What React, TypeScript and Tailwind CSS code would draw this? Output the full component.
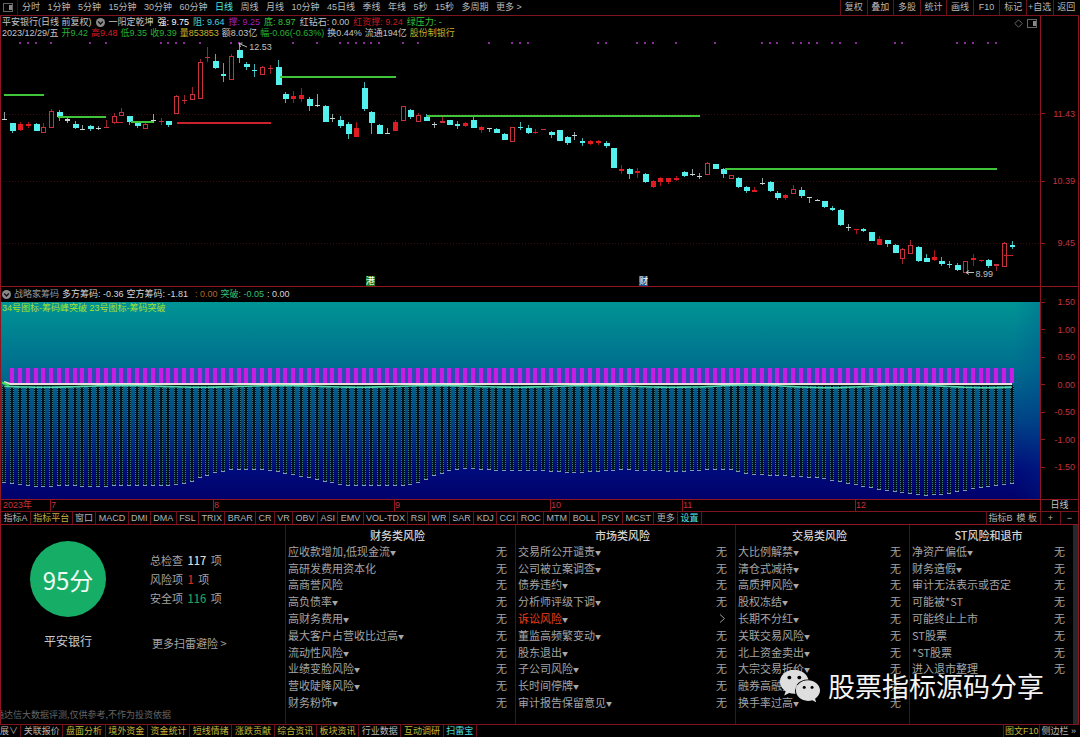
import clsx from 'clsx';
import { FaWeixin } from 'react-icons/fa';

type Kind = 'c' | 'r' | 'R' | 'w';
// kind, high, body top, body bottom, low
type Candle = [Kind, number, number, number, number];

const PITCH = 7.81;
const barX = (i: number) => 4.3 + i * PITCH;

const candles: Candle[] = [
  ['w', 112, 119, 120, 120], ['c', 123, 123, 131, 133], ['R', 122, 124, 130, 131], ['R', 122, 124, 126, 128],
  ['c', 123, 124, 131, 131], ['r', 123, 127, 132, 132], ['r', 109, 111, 127, 128], ['c', 110, 112, 117, 121],
  ['w', 117, 119, 121, 123], ['c', 121, 124, 128, 129], ['w', 125, 129, 130, 130], ['c', 125, 126, 129, 131],
  ['w', 126, 128, 129, 130], ['r', 120, 127, 128, 128], ['r', 113, 116, 122, 124], ['r', 108, 112, 115, 116],
  ['c', 116, 116, 122, 125], ['c', 121, 123, 126, 128], ['r', 123, 124, 128, 128], ['w', 114, 120, 121, 123],
  ['r', 118, 121, 122, 125], ['c', 121, 121, 125, 127], ['r', 95, 96, 113, 113], ['r', 95, 100, 101, 104],
  ['r', 87, 94, 99, 100], ['r', 59, 62, 98, 98], ['r', 47, 57, 58, 62], ['c', 54, 61, 68, 69],
  ['c', 63, 74, 76, 82], ['r', 54, 56, 79, 80], ['c', 43, 50, 58, 63], ['c', 62, 64, 67, 70],
  ['c', 64, 70, 71, 77], ['r', 66, 67, 74, 74], ['r', 65, 68, 69, 74], ['c', 60, 67, 85, 85],
  ['c', 92, 94, 99, 103], ['R', 91, 96, 99, 103], ['R', 88, 95, 99, 102], ['c', 97, 99, 106, 111],
  ['w', 94, 105, 106, 107], ['c', 105, 106, 122, 122], ['w', 114, 118, 119, 122], ['c', 116, 120, 126, 128],
  ['c', 122, 124, 134, 139], ['R', 122, 128, 137, 137], ['c', 82, 88, 109, 111], ['c', 111, 112, 123, 134],
  ['c', 124, 125, 134, 134], ['w', 128, 133, 134, 134], ['R', 120, 122, 131, 131], ['r', 106, 106, 120, 120],
  ['c', 109, 110, 117, 119], ['r', 113, 115, 121, 122], ['c', 114, 117, 121, 121], ['w', 122, 124, 125, 128],
  ['r', 116, 121, 123, 123], ['c', 120, 120, 125, 125], ['c', 121, 124, 126, 129], ['R', 122, 123, 126, 127],
  ['c', 115, 120, 128, 128], ['R', 126, 127, 130, 133], ['w', 128, 128, 129, 132], ['c', 128, 129, 133, 133],
  ['c', 133, 134, 140, 140], ['r', 127, 127, 141, 141], ['c', 122, 127, 128, 130], ['c', 125, 128, 133, 134],
  ['R', 129, 132, 133, 134], ['r', 129, 129, 130, 130], ['c', 131, 132, 135, 138], ['c', 130, 130, 141, 141],
  ['c', 136, 137, 143, 145], ['w', 132, 135, 136, 140], ['c', 138, 141, 143, 146], ['R', 140, 141, 144, 145],
  ['R', 140, 141, 143, 145], ['c', 141, 143, 146, 148], ['c', 148, 148, 168, 168], ['R', 165, 169, 171, 174],
  ['c', 168, 169, 174, 179], ['R', 168, 171, 173, 178], ['c', 173, 174, 182, 183], ['R', 180, 181, 187, 188],
  ['R', 177, 178, 182, 186], ['R', 178, 178, 182, 184], ['R', 176, 178, 180, 181], ['c', 171, 172, 176, 177],
  ['w', 169, 174, 175, 176], ['w', 173, 176, 177, 179], ['r', 162, 163, 174, 174], ['c', 164, 164, 169, 169],
  ['c', 168, 169, 174, 178], ['r', 175, 175, 178, 178], ['c', 177, 178, 187, 188], ['c', 186, 187, 191, 193],
  ['R', 187, 190, 192, 192], ['w', 178, 183, 184, 185], ['c', 181, 182, 191, 192], ['c', 191, 193, 198, 200],
  ['R', 194, 195, 198, 200], ['r', 185, 189, 193, 193], ['c', 187, 190, 196, 198], ['w', 197, 197, 198, 203],
  ['w', 199, 200, 201, 201], ['c', 201, 201, 207, 208], ['c', 206, 208, 210, 211], ['c', 209, 210, 225, 226],
  ['w', 224, 227, 228, 231], ['R', 229, 229, 230, 234], ['c', 228, 229, 231, 232], ['c', 232, 232, 241, 241],
  ['R', 236, 239, 245, 245], ['c', 240, 240, 244, 247], ['c', 244, 245, 253, 253], ['r', 248, 249, 258, 264],
  ['r', 240, 245, 253, 253], ['c', 246, 247, 261, 262], ['c', 254, 258, 262, 262], ['R', 250, 257, 260, 261],
  ['c', 257, 261, 264, 266], ['c', 261, 264, 265, 268], ['c', 263, 265, 270, 271], ['r', 261, 261, 272, 272],
  ['R', 254, 258, 260, 266], ['R', 260, 260, 261, 262], ['c', 259, 260, 266, 268], ['r', 264, 264, 266, 271],
  ['r', 242, 243, 266, 267], ['c', 241, 245, 247, 249],
];

const dotBars = [
  2, 3, 4, 6, 11, 13, 20, 21, 22, 23, 25, 29, 30, 37, 40, 43, 44, 45, 46, 47, 48, 51, 53, 62, 65, 66, 67,
  76, 77, 81, 82, 83, 86, 91, 97, 98, 99, 101, 102, 103, 104, 106, 107, 109, 114, 115, 122, 123, 124, 126, 127,
];

// x1, x2, y, color
const levels: [number, number, number, string][] = [
  [4, 44, 94, '#3fc43a'],
  [58, 106, 116, '#3fc43a'],
  [131, 153, 121, '#3fc43a'],
  [113, 123, 122, '#c8232c'],
  [177, 271, 122, '#c8232c'],
  [280, 396, 76, '#3fc43a'],
  [427, 700, 115, '#3fc43a'],
  [725, 997, 168, '#3fc43a'],
  [1004, 1013, 255, '#c8232c'],
];

// bar index, bottom of the column
const depth: [number, number][] = [
  [0, 482], [3, 485], [5, 486], [7, 485], [12, 486], [15, 485], [21, 485], [23, 483], [24, 481], [25, 477],
  [27, 472], [29, 469], [33, 469], [35, 471], [37, 474], [40, 479], [44, 485], [51, 485], [53, 482], [55, 475],
  [57, 470], [59, 468], [62, 469], [63, 470], [69, 470], [73, 472], [77, 470], [79, 469], [83, 470], [86, 471],
  [90, 469], [93, 469], [95, 473], [99, 475], [104, 477], [107, 481], [109, 484], [113, 490], [116, 493],
  [118, 495], [121, 493], [124, 488], [126, 486], [129, 483],
];

function depthAt(i: number) {
  const n = depth.findIndex(([b]) => b >= i);
  if (n <= 0) return depth[0][1];
  const [x0, y0] = depth[n - 1];
  const [x1, y1] = depth[n];
  return Math.round(y0 + ((y1 - y0) * (i - x0)) / (x1 - x0));
}

const signal = candles
  .map((_, i) => `${barX(i).toFixed(1)},${(386.4 + Math.sin(i / 3.2) * (i > 88 ? 1.3 : 0.8)).toFixed(1)}`)
  .join(' ');

const periods = ['分时', '1分钟', '5分钟', '15分钟', '30分钟', '60分钟', '日线', '周线', '月线', '10分钟', '45日线', '季线', '年线', '5秒', '15秒', '多周期', '更多 >'];
const tools = ['复权', '叠加', '多股', '统计', '画线', 'F10', '标记', '+自选', '返回'];
const indicators = ['指标A', '指标平台', '窗口', 'MACD', 'DMI', 'DMA', 'FSL', 'TRIX', 'BRAR', 'CR', 'VR', 'OBV', 'ASI', 'EMV', 'VOL-TDX', 'RSI', 'WR', 'SAR', 'KDJ', 'CCI', 'ROC', 'MTM', 'BOLL', 'PSY', 'MCST', '更多', '设置'];
const footerTabs = ['关联报价', '盘面分析', '境外资金', '资金统计', '短线情绪', '涨跌贡献', '综合资讯', '板块资讯', '行业数据', '互动调研', '扫雷宝'];

const risks = [
  {
    title: '财务类风险',
    items: ['应收款增加,低现金流▼', '高研发费用资本化', '高商誉风险', '高负债率▼', '高财务费用▼', '最大客户占营收比过高▼', '流动性风险▼', '业绩变脸风险▼', '营收陡降风险▼', '财务粉饰▼'],
  },
  {
    title: '市场类风险',
    items: ['交易所公开谴责▼', '公司被立案调查▼', '债券违约▼', '分析师评级下调▼', '诉讼风险▼', '董监高频繁变动▼', '股东退出▼', '子公司风险▼', '长时间停牌▼', '审计报告保留意见▼'],
  },
  {
    title: '交易类风险',
    items: ['大比例解禁▼', '清仓式减持▼', '高质押风险▼', '股权冻结▼', '长期不分红▼', '关联交易风险▼', '北上资金卖出▼', '大宗交易折价▼', '融券高融资▼', '换手率过高▼'],
  },
  {
    title: 'ST风险和退市',
    items: ['净资产偏低▼', '财务造假▼', '审计无法表示或否定', '可能被*ST', '可能终止上市', 'ST股票', '*ST股票', '进入退市整理', '', ''],
  },
];

const fill = { c: '#54f0ee', r: '#c8323c', R: '#e01c22', w: '#c8d8d8' };

function PanelIcon() {
  return (
    <svg className="h-[9px] w-[11px]" viewBox="0 0 11 9" fill="none" stroke="#666">
      <rect x="0.5" y="0.5" width="9" height="8" />
      <rect x="6" y="2" width="3" height="5" fill="#888" stroke="none" />
    </svg>
  );
}

function ToggleIcon() {
  return (
    <svg className="h-[9px] w-[9px] shrink-0" viewBox="0 0 9 9">
      <circle cx="4.5" cy="4.5" r="4.5" fill="#8a8a8a" />
      <path d="M2.2 3.5 4.5 6 6.8 3.5" stroke="#111" strokeWidth="1.3" fill="none" />
    </svg>
  );
}

function Toolbar() {
  return (
    <header className="flex h-4 items-center border-b border-[#7d141e] text-[#b8b8b8]">
      <div className="flex h-full w-[18px] items-center justify-center border-r border-[#4a0c12]">
        <PanelIcon />
      </div>
      <nav className="flex w-[504px] justify-between pl-1">
        {periods.map((p) => (
          <button key={p} className={clsx('whitespace-nowrap', p === '日线' && 'text-[#4fe6e6]')}>
            {p}
          </button>
        ))}
      </nav>
      <div className="ml-auto flex h-full w-[239px]">
        {tools.map((t) => (
          <button key={t} className="flex-1 border-l border-[#6b101a] whitespace-nowrap">
            {t}
          </button>
        ))}
      </div>
    </header>
  );
}

function KLine() {
  return (
    <section className="flex border-b border-[#8f1620]">
      <div className="min-w-0 flex-1">
        <div className="relative h-6 pt-px pl-px leading-[11px] whitespace-nowrap">
          <div className="flex items-center gap-1 text-[#c4c4c4]">
            <span>平安银行(日线 前复权)</span>
            <ToggleIcon />
            <span>一阳定乾坤</span>
            <span className="text-white">强: 9.75</span>
            <span className="text-[#45d5e0]">阻: 9.64</span>
            <span className="text-[#a51fb0]">撑: 9.25</span>
            <span className="text-[#35c53c]">底: 8.97</span>
            <span>红钻石: 0.00</span>
            <span className="text-[#c01c22]">红资撑: 9.24</span>
            <span className="text-[#35c53c]">绿压力: -</span>
          </div>
          <div className="flex gap-[3px] text-[#c4c4c4]">
            <span>2023/12/29/五</span>
            <span className="text-[#27b035]">开9.42</span>
            <span className="text-[#d81e26]">高9.48</span>
            <span className="text-[#27b035]">低9.35</span>
            <span className="text-[#27b035]">收9.39</span>
            <span className="text-[#c9b02c]">量853853</span>
            <span>额8.03亿</span>
            <span className="text-[#27b035]">幅-0.06(-0.63%)</span>
            <span>换0.44%</span>
            <span>流通194亿</span>
            <span className="text-[#c9b02c]">股份制银行</span>
          </div>
          <div className="absolute top-[3px] right-0.5 flex items-center gap-1">
            <svg className="h-[9px] w-[9px]" viewBox="0 0 9 9" fill="none" stroke="#666">
              <path d="M4.5 0.8 8.2 4.5 4.5 8.2 0.8 4.5Z" />
            </svg>
            <PanelIcon />
          </div>
        </div>

        <div className="relative">
          <svg className="block h-[246px] w-full" viewBox="1 40 1039 246" preserveAspectRatio="none" shapeRendering="crispEdges">
            {[114.5, 181.5, 243.5].map((y) => (
              <line key={y} x1="0" x2="1040" y1={y} y2={y} stroke="#3c0c0f" strokeDasharray="1 2" />
            ))}
            {dotBars.map((i) => (
              <rect key={i} x={Math.round(barX(i)) - 1} y="42" width="2" height="2" fill="#8c2a9c" />
            ))}
            {candles.map(([k, hi, top, bottom, lo], i) => {
              const x = Math.round(barX(i));
              const hollow = k === 'r' && bottom - top > 2;
              return (
                <g key={i}>
                  <line x1={x + 0.5} x2={x + 0.5} y1={hi} y2={lo} stroke={fill[k]} strokeOpacity="0.75" />
                  {hollow ? (
                    <rect x={x - 1.5} y={top + 0.5} width="4" height={bottom - top} fill="#000" stroke={fill[k]} />
                  ) : (
                    <rect x={x - 2} y={top} width={k === 'c' && bottom - top > 2 ? 6 : 5} height={bottom - top} fill={fill[k]} />
                  )}
                </g>
              );
            })}
            {levels.map(([x1, x2, y, color]) => (
              <rect key={x1} x={x1} y={y} width={x2 - x1} height={y === 255 || x1 === 113 ? 1 : 2} fill={color} />
            ))}
            <g shapeRendering="auto" stroke="#bbb" fill="none">
              <path d="M239 43.5 247 47M239 43.5l3.5-.5M239 43.5l1.5 3.5" />
              <path d="M966 272.5h8M966 272.5l3-2M966 272.5l3 2" />
            </g>
          </svg>
          <span className="absolute top-[1%] left-[23.9%] leading-[11px] text-[#c0c0c0]">12.53</span>
          <span className="absolute top-[93%] left-[93.8%] leading-[11px] text-[#c0c0c0]">8.99</span>
          <span className="absolute bottom-0 left-[35.1%] bg-[#157a1c] leading-[10px] text-white">港</span>
          <span className="absolute bottom-0 left-[61.4%] bg-[#174f8c] leading-[10px] text-white">财</span>
        </div>
      </div>

      <div className="relative w-[38px] border-l border-[#8f1620] text-right text-[#c2343e]">
        {[
          ['11.43', 'top-[34%]'],
          ['10.39', 'top-[59%]'],
          ['9.45', 'top-[82%]'],
        ].map(([v, top]) => (
          <div key={v} className={clsx('absolute right-0 flex w-full items-center justify-between pr-[3px] leading-[12px]', top)}>
            <i className="h-px w-1 bg-[#8f1620]" />
            {v}
          </div>
        ))}
      </div>
    </section>
  );
}

function ChipChart() {
  return (
    <section className="flex border-b border-[#8f1620]">
      <div className="min-w-0 flex-1">
        <div className="flex h-[15px] items-center gap-[3px] pl-px whitespace-nowrap text-[#d8d8d8]">
          <ToggleIcon />
          <span className="text-[#9a9a9a]">战略家筹码</span>
          <span>多方筹码: -0.36</span>
          <span>空方筹码: -1.81</span>
          <span className="pl-1 text-[#b06a2c]">: 0.00</span>
          <span className="text-[#35c078]">突破: -0.05</span>
          <span>: 0.00</span>
        </div>
        <div className="relative">
          <svg className="block h-[197px] w-full" viewBox="1 302 1039 197" preserveAspectRatio="none">
            <defs>
              <linearGradient id="sea" x1="0" y1="0" x2="0" y2="1">
                <stop offset="0" stopColor="#009494" />
                <stop offset="0.35" stopColor="#006c8e" />
                <stop offset="0.6" stopColor="#004486" />
                <stop offset="0.85" stopColor="#000c7c" />
                <stop offset="1" stopColor="#00006a" />
              </linearGradient>
              <linearGradient id="edge" x1="0" y1="0" x2="1" y2="0">
                <stop offset="0" stopColor="#003c8c" stopOpacity="0" />
                <stop offset="1" stopColor="#003c8c" stopOpacity="0.2" />
              </linearGradient>
            </defs>
            <rect x="0" y="302" width="1040" height="197" fill="url(#sea)" />
            <rect x="1014" y="302" width="26" height="197" fill="url(#edge)" />
            <rect x="10" y="368" width="1004" height="15" fill="#3c46be" fillOpacity="0.7" />
            <g shapeRendering="crispEdges">
              {candles.map((_, i) => {
                const x = Math.round(barX(i));
                const y = depthAt(i);
                return (
                  <g key={i}>
                    {i > 0 && <rect x={x - 2} y="368" width="4" height="15" fill="#c81ee4" />}
                    <rect x={x - 2} y="386" width="4" height={y - 386} fill="#00141e" />
                    <path d={`M${x - 1.5} 386V${y}M${x + 1.5} 386V${y}`} stroke="#3c7c80" strokeDasharray="1 1" fill="none" />
                    <path d={`M${x - 2} ${y + 0.5}h4`} stroke="#7c9cb0" />
                  </g>
                );
              })}
              <rect x="4" y="385" width="1009" height="1" fill="#08201c" />
            </g>
            <path d="M4 382 10 384H1012" stroke="#ecdce0" strokeWidth="2" fill="none" />
            <polyline points={signal} fill="none" stroke="#52d8a8" strokeWidth="1.6" />
            <path d="M2 382.5 9 385.5" stroke="#3cd860" strokeWidth="2" />
          </svg>
          <p className="absolute top-px left-px leading-[11px] whitespace-nowrap text-[#a8e02c]">
            34号图标-筹码峰突破 23号图标-筹码突破
          </p>
        </div>
      </div>
      <div className="flex w-[38px] flex-col justify-between border-l border-[#8f1620] pt-[9px] pb-[26px] text-right text-[#c2343e]">
        {['1.50', '1.00', '0.50', '0.00', '-0.50', '-1.00', '-1.50'].map((v) => (
          <div key={v} className="flex items-center justify-between pr-[3px] leading-[12px]">
            <i className="h-px w-1 bg-[#8f1620]" />
            {v}
          </div>
        ))}
      </div>
    </section>
  );
}

function TimeAxis() {
  return (
    <div className="flex h-3 border-b border-[#7d141e] leading-[11px] text-[#c8323c]">
      <div className="grid flex-1 grid-cols-[49fr_163fr_181fr_156fr_132fr_173fr_185fr]">
        {['2023年', '7', '8', '9', '10', '11', '12'].map((m, i) => (
          <span key={m} className={clsx(i > 0 ? 'border-l border-[#8f1620]' : 'pl-0.5')}>
            {m}
          </span>
        ))}
      </div>
      <span className="w-[38px] border-l border-[#8f1620] text-center text-[#c4c4c4]">日线</span>
    </div>
  );
}

function IndicatorTabs() {
  return (
    <nav className="flex h-[13px] border-b border-[#8f1620] leading-[12px] text-[#b4b4b4]">
      <div className="flex w-[701px]">
        {indicators.map((t) => (
          <button
            key={t}
            className={clsx(
              'flex-auto border-r border-[#6b101a] whitespace-nowrap',
              t === '指标平台' && 'text-[#c0b040]',
              t === '设置' && 'text-[#4fe6e6]'
            )}
          >
            {t}
          </button>
        ))}
      </div>
      <div className="ml-auto flex">
        <button className="border-l border-[#6b101a] px-px">指标B</button>
        <button className="px-[3px]">模 板</button>
        <button className="w-5 border-l border-[#6b101a]">+</button>
        <button className="w-[18px] border-l border-[#6b101a]">−</button>
      </div>
    </nav>
  );
}

function RiskTable({ title, items }: { title: string; items: string[] }) {
  return (
    <div className="border-l border-[#222] pr-2 pl-0.5">
      <table className="h-[168px] w-full">
        <caption className="h-[18px] pt-[2px] leading-[16px] font-medium text-[#d0d0d0]">{title}</caption>
        <tbody>
          {items.map((item, i) => {
            const hit = item.startsWith('诉讼');
            return (
              <tr key={i} className="leading-[15px]">
                <td className={clsx('p-0 whitespace-nowrap', hit && 'text-[#e8401c]')}>
                  {item.replace('▼', '')}
                  {item.endsWith('▼') && <span className="align-[1px] text-[6px] leading-none text-[#a8a8a8]">▼</span>}
                </td>
                <td className="p-0 text-right">
                  {hit ? (
                    <svg className="ml-auto h-[9px] w-[9px]" viewBox="0 0 9 9" fill="none" stroke="#999">
                      <path d="M2 0.5 6.5 4.5 2 8.5" />
                    </svg>
                  ) : item ? (
                    '无'
                  ) : (
                    '\u00a0'
                  )}
                </td>
              </tr>
            );
          })}
        </tbody>
      </table>
    </div>
  );
}

function RiskPanel() {
  return (
    <section className="relative flex h-[199px] overflow-hidden font-['Noto_Sans_CJK_SC',sans-serif] text-[11px] text-[#a4a4a4]">
      <div className="grid flex-1 grid-cols-[284fr_230fr_220fr_174fr_164fr]">
        <div className="flex flex-col justify-between">
          <div className="flex pt-4 pl-[29px]">
            <div className="flex w-[76px] flex-col items-center">
              <div className="flex h-[76px] w-[76px] items-center justify-center rounded-full bg-[#16ad67] text-[24px] text-[#eefaf2]">
                95分
              </div>
              <p className="mt-[15px] text-[12px] leading-[18px] text-[#c8c8c8]">平安银行</p>
            </div>
            <div className="ml-11 pt-[10px] leading-[19px]">
              <p>总检查 <b className="mx-0.5 font-medium text-[#d8d8d8]">117</b> 项</p>
              <p>风险项 <b className="mx-0.5 font-medium text-[#d8281e]">1</b> 项</p>
              <p>安全项 <b className="mx-0.5 font-medium text-[#1f9c58]">116</b> 项</p>
              <a href="#more" className="mt-[26px] ml-0.5 block">更多扫雷避险 &gt;</a>
            </div>
          </div>
          <p className="-ml-1.5 pb-[3px] text-[9px] leading-[13px] text-[#666]">通达信大数据评测,仅供参考,不作为投资依据</p>
        </div>
        {risks.map((r) => (
          <RiskTable key={r.title} {...r} />
        ))}
      </div>
      <div className="w-[5px] bg-[#26282c]" />

      <div className="absolute right-[34px] bottom-[17px] flex items-center gap-[7px] text-[27px] leading-[36px] whitespace-nowrap text-[#f4f4f4]">
        <FaWeixin className="h-[42px] w-[42px] text-[#dedede]" />
        股票指标源码分享
      </div>
    </section>
  );
}

function BottomBar() {
  return (
    <footer className="flex h-[13px] border-t border-[#7d141e] leading-[12px] text-[#c0b93a]">
      <div className="flex w-[477px]">
        <button className="border-r border-[#6b101a] pr-0.5 whitespace-nowrap text-[#b8b8b8]">展∨</button>
        {footerTabs.map((t) => (
          <button
            key={t}
            className={clsx(
              'flex-auto border-r border-[#6b101a] whitespace-nowrap',
              (t === '关联报价' || t === '行业数据') && 'text-[#b8b8b8]',
              t === '扫雷宝' && 'text-[#4fe6e6]'
            )}
          >
            {t}
          </button>
        ))}
      </div>
      <button className="ml-auto border-x border-[#6b101a] px-px">图文F10</button>
      <button className="pr-[3px] pl-px text-[#b8b8b8]">侧边栏 »</button>
    </footer>
  );
}

export default function App() {
  return (
    <div className="w-full overflow-hidden bg-black pr-px font-['Liberation_Sans','Noto_Sans_CJK_SC',sans-serif] text-[9px] leading-[13px]">
      <Toolbar />
      <div className="border-x border-[#8f1620]">
        <KLine />
        <ChipChart />
        <TimeAxis />
        <IndicatorTabs />
        <RiskPanel />
      </div>
      <BottomBar />
    </div>
  );
}
